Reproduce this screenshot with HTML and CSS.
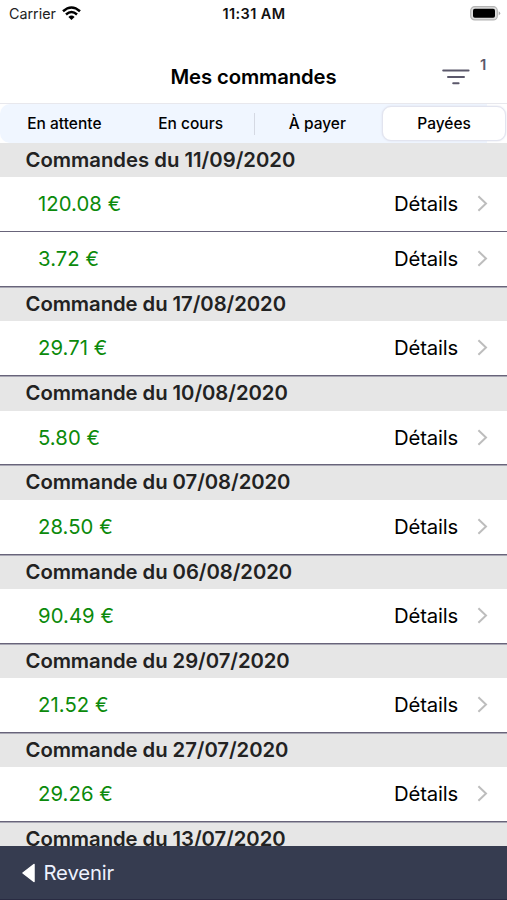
FILE: index.html
```html
<!DOCTYPE html>
<html lang="fr">
<head>
<meta charset="utf-8">
<title>Mes commandes</title>
<link rel="stylesheet" href="styles.css">
</head>
<body>
<div class="app">
  <div class="status">
    <div class="carrier"><span>Carrier</span>
      <svg width="19" height="15" viewBox="0 0 19 15" fill="none" stroke="#000" stroke-width="2.5"><path d="M1 5.3Q9.5 -2.4 18 5.3"/><path d="M4 8.5Q9.5 3.5 15 8.5"/><path d="M9.5 14L6.4 10.9Q9.5 8.3 12.6 10.9Z" fill="#000" stroke="none"/></svg>
    </div>
    <div class="clock">11:31 AM</div>
    <svg class="battery" width="31" height="15" viewBox="0 0 31 15"><rect x=".7" y=".7" width="26.6" height="13.2" rx="4" fill="#dedede" stroke="#b4b4b4" stroke-width="1.2"/><rect x="3" y="2.8" width="22" height="9" rx="1.8"/><path d="M28.7 5.2Q31.8 7.3 28.7 9.4Z" fill="#aaa"/></svg>
  </div>
  <header class="navbar">
    <h1>Mes commandes</h1>
    <div class="filter">
      <svg width="28" height="17" viewBox="0 0 28 17" stroke="#5b586b" stroke-width="2" stroke-linecap="round"><path d="M1.2 1.5H26.6M6 7.9H22M11.2 14.3H16.6"/></svg>
      <span class="count">1</span>
    </div>
  </header>
  <nav class="tabs">
    <div class="tab">En attente</div>
    <div class="tab">En cours</div>
    <div class="tab divided">À payer</div>
    <div class="tab active">Payées</div>
  </nav>
  <main class="orders">
    <section><h2 class="first">Commandes du 11/09/2020</h2>
      <div class="row"><span class="price">120.08 €</span><span class="details">Détails</span><svg class="chevron" viewBox="0 0 11 17"><path d="M1.4 1.2L9 8.5L1.4 15.8"/></svg></div>
      <div class="row"><span class="price">3.72 €</span><span class="details">Détails</span><svg class="chevron" viewBox="0 0 11 17"><path d="M1.4 1.2L9 8.5L1.4 15.8"/></svg></div>
    </section>
    <section><h2>Commande du 17/08/2020</h2>
      <div class="row"><span class="price">29.71 €</span><span class="details">Détails</span><svg class="chevron" viewBox="0 0 11 17"><path d="M1.4 1.2L9 8.5L1.4 15.8"/></svg></div>
    </section>
    <section><h2>Commande du 10/08/2020</h2>
      <div class="row"><span class="price">5.80 €</span><span class="details">Détails</span><svg class="chevron" viewBox="0 0 11 17"><path d="M1.4 1.2L9 8.5L1.4 15.8"/></svg></div>
    </section>
    <section><h2>Commande du 07/08/2020</h2>
      <div class="row"><span class="price">28.50 €</span><span class="details">Détails</span><svg class="chevron" viewBox="0 0 11 17"><path d="M1.4 1.2L9 8.5L1.4 15.8"/></svg></div>
    </section>
    <section><h2>Commande du 06/08/2020</h2>
      <div class="row"><span class="price">90.49 €</span><span class="details">Détails</span><svg class="chevron" viewBox="0 0 11 17"><path d="M1.4 1.2L9 8.5L1.4 15.8"/></svg></div>
    </section>
    <section><h2>Commande du 29/07/2020</h2>
      <div class="row"><span class="price">21.52 €</span><span class="details">Détails</span><svg class="chevron" viewBox="0 0 11 17"><path d="M1.4 1.2L9 8.5L1.4 15.8"/></svg></div>
    </section>
    <section><h2>Commande du 27/07/2020</h2>
      <div class="row"><span class="price">29.26 €</span><span class="details">Détails</span><svg class="chevron" viewBox="0 0 11 17"><path d="M1.4 1.2L9 8.5L1.4 15.8"/></svg></div>
    </section>
    <section><h2>Commande du 13/07/2020</h2></section>
  </main>
  <footer class="back">
    <svg width="14" height="20" viewBox="0 0 14 20"><path d="M1 10L12 1.5V18.5Z" fill="#fff" stroke="#fff" stroke-width="1.5" stroke-linejoin="round"/></svg>
    <span>Revenir</span>
  </footer>
</div>
</body>
</html>
```
FILE: styles.css
```css
* { box-sizing: border-box; }
body { margin: 0; background: #fff; color: #000; font-family: Inter, "Liberation Sans", sans-serif; }
h1, h2 { margin: 0; }
svg { display: block; flex: none; }
.app { display: flex; flex-direction: column; width: 507px; height: 900px; overflow: hidden; }
.status { display: grid; grid-template-columns: 1fr auto 1fr; align-items: center; height: 27px; padding: 0 6px 0 9px; flex: none; }
.carrier { display: flex; align-items: center; gap: 6px; font-size: 14.3px; color: #222; }
.carrier svg { margin-top: -1px; }
.clock { font-size: 14.5px; font-weight: 600; letter-spacing: .4px; margin-right: 2px; color: #111; }
.battery { justify-self: end; }
.navbar { display: grid; grid-template-columns: 1fr auto 1fr; align-items: center; height: 76px; padding-top: 24px; flex: none; }
.navbar h1 { grid-column: 2; font-size: 20.3px; line-height: 24px; font-weight: 600; letter-spacing: -.12px; }
.filter { display: flex; justify-self: end; align-items: center; gap: 10px; padding-right: 18px; color: #5b586b; }
.count { width: 9px; margin-top: -24px; font-size: 15px; font-weight: 600; line-height: 18px; }
.tabs { display: grid; grid-template-columns: repeat(4, 1fr); height: 40px; flex: none; background: linear-gradient(90deg, #fff 0 20px, #f0f6ff 20px 487px, #fff 487px); border-top: 1px solid #e8e8ed; }
.tab { display: flex; align-items: center; justify-content: center; padding-left: 1px; background: #f0f6ff; font-size: 15.5px; font-weight: 500; }
.tab:first-child { border-radius: 10px 0 0 10px; padding-left: 2px; }
.divided { background: linear-gradient(#d5d9e3, #d5d9e3) 0 50% / 1px 22px no-repeat #f0f6ff; }
.tab.active { margin: 2px 1px 2px 2px; padding-left: 0; border: 1px solid #e2e4ef; border-radius: 9px; background: #fff; box-shadow: 0 0 2px #d9dbe8; }
.orders { flex: 1; min-height: 0; overflow: hidden; }
h2 { height: 34.3px; padding-left: 25.5px; background: #e6e6e6; border-top: 1px solid #a9a8b4; color: #222; font-size: 20.3px; font-weight: 600; line-height: 31.4px; letter-spacing: -.06px; white-space: nowrap; }
h2.first { border-top: 0; line-height: 34px; letter-spacing: 0; }
.row { display: flex; align-items: center; height: 54.9px; padding: 0 19px 1px 38px; border-bottom: 1px solid #68647a; font-size: 20.3px; }
.price { flex: 1; color: #0b8a0b; letter-spacing: .07px; }
.details { width: 64px; margin-right: 19px; letter-spacing: -.15px; white-space: nowrap; }
.chevron { width: 11px; height: 17px; fill: none; stroke: #bdbdbd; stroke-width: 2; }
.back { display: flex; align-items: center; gap: 7.5px; height: 54px; padding: 0 22px; flex: none; background: #363c50; color: #eef2ff; font-size: 20.3px; letter-spacing: -.15px; border-bottom: 1px solid #292b42; }
```
